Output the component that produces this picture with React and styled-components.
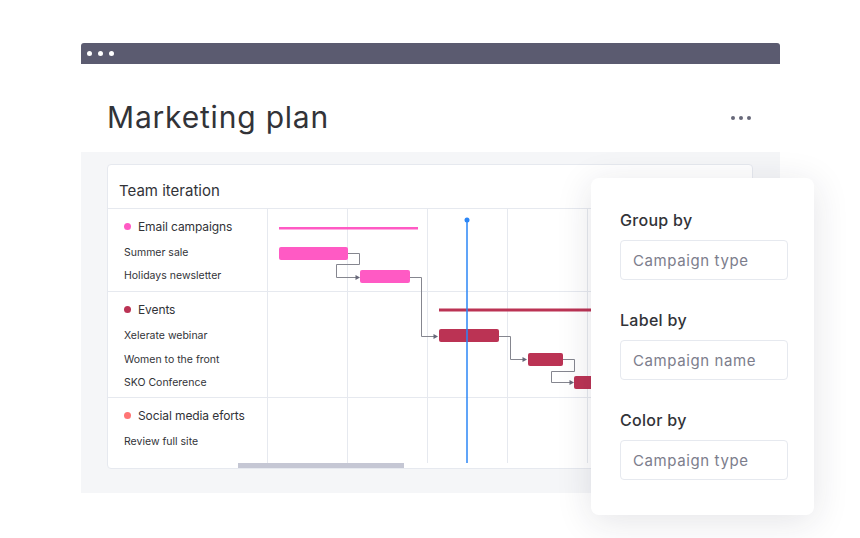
import React from 'react';
import styled, { createGlobalStyle } from 'styled-components';

const GlobalStyle = createGlobalStyle`
    body {
        margin: 0;
        background: #ffffff;
        font-family: Inter, "Noto Sans", sans-serif;
        color: #323338;
    }
`;

const Page = styled.div`
    min-height: 538px;
    box-sizing: border-box;
    padding: 43px 0 0 81px;
`;

const Frame = styled.div`
    width: 699px;
    position: relative;
`;

const WindowBar = styled.div`
    height: 21px;
    background: #5b5b70;
    border-radius: 3px 3px 0 0;
    display: flex;
    align-items: center;
    gap: 6px;
    padding-left: 6px;
`;

const WindowDot = styled.span`
    width: 5px;
    height: 5px;
    border-radius: 50%;
    background: #ffffff;
`;

const TitleRow = styled.div`
    height: 88px;
    box-sizing: border-box;
    padding: 35px 29px 0 26px;
    display: flex;
    align-items: flex-start;
    justify-content: space-between;
`;

const Title = styled.h1`
    margin: 0;
    font-size: 30px;
    line-height: 36px;
    font-weight: 400;
    letter-spacing: 0.8px;
    color: #323338;
`;

const MoreDots = styled.div`
    display: flex;
    gap: 4px;
    margin-top: 17px;

    span {
        width: 4px;
        height: 4px;
        border-radius: 50%;
        background: #676879;
    }
`;

const Board = styled.div`
    background: #f5f6f8;
    height: 341px;
    box-sizing: border-box;
    padding: 12px 27px 0 26px;
`;

const Card = styled.div`
    background: #ffffff;
    border: 1px solid #e6e9ef;
    border-radius: 4px;
    overflow: hidden;
`;

const CardHeader = styled.div`
    height: 44px;
    box-sizing: border-box;
    border-bottom: 1px solid #e6e9ef;
    padding: 16px 0 0 11px;
    font-size: 15px;
    line-height: 20px;
`;

const Body = styled.div`
    position: relative;
    height: 254px;
    display: flex;
    flex-direction: column;
`;

const Group = styled.div`
    display: flex;
    height: ${props => props.height ? `${props.height}px` : 'auto'};
    flex: ${props => props.height ? 'none' : '1'};
    box-sizing: border-box;
    border-bottom: ${props => props.last ? 'none' : '1px solid #e6e9ef'};
`;

const LabelCell = styled.div`
    width: 160px;
    box-sizing: border-box;
    border-right: 1px solid #e6e9ef;
    padding: 7px 0 0 16px;
`;

const TimeCell = styled.div`
    flex: 1;
    background-image: repeating-linear-gradient(
        to right,
        transparent 0,
        transparent 79px,
        #e6e9ef 79px,
        #e6e9ef 80px
    );
`;

const GroupTitle = styled.div`
    display: flex;
    align-items: center;
    gap: 7px;
    height: 20px;
    margin-bottom: 5px;
    font-size: 12px;
    letter-spacing: -0.1px;
    color: #323338;
`;

const GroupDot = styled.span`
    width: 7px;
    height: 7px;
    border-radius: 50%;
    background: ${props => props.color};
`;

const Item = styled.div`
    font-size: 10.5px;
    line-height: ${props => props.tall ? '23.5px' : '23px'};
    color: #323338;
`;

const Chart = styled.svg`
    position: absolute;
    left: 160px;
    top: 0;
    pointer-events: none;
`;

const ScrollTrack = styled.div`
    height: 5px;
    padding-left: 130px;
`;

const ScrollThumb = styled.div`
    width: 166px;
    height: 5px;
    background: #c5c7d4;
`;

const Settings = styled.div`
    position: absolute;
    left: 510px;
    top: 135px;
    width: 223px;
    height: 337px;
    box-sizing: border-box;
    padding: 30px 0 0 29px;
    background: #ffffff;
    border-radius: 8px;
    box-shadow: 0 6px 36px rgba(30, 31, 60, 0.12);
    display: flex;
    flex-direction: column;
    gap: 28px;
`;

const Field = styled.div`
    display: flex;
    flex-direction: column;
    gap: 8px;
`;

const FieldLabel = styled.div`
    font-size: 16px;
    line-height: 24px;
    font-weight: 500;
    letter-spacing: 0.3px;
    color: #323338;
`;

const FieldBox = styled.div`
    width: 168px;
    height: 40px;
    box-sizing: border-box;
    border: 1px solid #e6e9ef;
    border-radius: 4px;
    padding-left: 12px;
    display: flex;
    align-items: center;
    font-size: 15px;
    letter-spacing: 0.6px;
    color: #7c7d8c;
`;

const groups = [
    { name: 'Email campaigns', color: '#ff5ac4', height: 83, items: ['Summer sale', 'Holidays newsletter'] },
    { name: 'Events', color: '#bb3354', height: 106, tall: true, items: ['Xelerate webinar', 'Women to the front', 'SKO Conference'] },
    { name: 'Social media eforts', color: '#ff7575', items: ['Review full site'] },
];

const bars = [
    { x: 11, y: 38, w: 69, color: '#ff5ac4' },
    { x: 92, y: 61, w: 50, color: '#ff5ac4' },
    { x: 171, y: 120, w: 60, color: '#bb3354' },
    { x: 260, y: 144, w: 35, color: '#bb3354' },
    { x: 306, y: 167, w: 60, color: '#bb3354' },
];

const links = [
    { d: 'M80 44.5H91.5V55.5H68.5V68.5H88', tip: [92, 68.5] },
    { d: 'M142 68.5H153.5V127.5H166', tip: [170, 127.5] },
    { d: 'M231 127.5H242.5V150.5H255', tip: [259, 150.5] },
    { d: 'M295 150.5H306.5V162.5H283.5V173.5H302', tip: [306, 173.5] },
];

function GanttChart() {
    return (
        <Chart width="484" height="254" viewBox="0 0 484 254">
            <rect x="11" y="18" width="139" height="2.5" fill="#ff5ac4" />
            <rect x="171" y="99.5" width="320" height="3" fill="#bb3354" />
            {links.map((l, i) => (
                <g key={i}>
                    <path d={l.d} fill="none" stroke="#85868f" strokeWidth="1" />
                    <path
                        d={`M${l.tip[0]} ${l.tip[1]}L${l.tip[0] - 4.5} ${l.tip[1] - 2.5}V${l.tip[1] + 2.5}Z`}
                        fill="#676879"
                    />
                </g>
            ))}
            {bars.map((b, i) => (
                <rect key={i} x={b.x} y={b.y} width={b.w} height="13" rx="2" fill={b.color} />
            ))}
            <line x1="199" y1="11" x2="199" y2="254" stroke="#2b86f6" strokeWidth="1.5" />
            <circle cx="199" cy="11" r="2.5" fill="#2b86f6" />
        </Chart>
    );
}

export default function App() {
    return (
        <Page>
            <GlobalStyle />
            <Frame>
                <WindowBar>
                    <WindowDot />
                    <WindowDot />
                    <WindowDot />
                </WindowBar>
                <TitleRow>
                    <Title>Marketing plan</Title>
                    <MoreDots>
                        <span />
                        <span />
                        <span />
                    </MoreDots>
                </TitleRow>
                <Board>
                    <Card>
                        <CardHeader>Team iteration</CardHeader>
                        <Body>
                            {groups.map((g, i) => (
                                <Group key={g.name} height={g.height} last={i === groups.length - 1}>
                                    <LabelCell>
                                        <GroupTitle>
                                            <GroupDot color={g.color} />
                                            {g.name}
                                        </GroupTitle>
                                        {g.items.map(item => (
                                            <Item key={item} tall={g.tall}>{item}</Item>
                                        ))}
                                    </LabelCell>
                                    <TimeCell />
                                </Group>
                            ))}
                            <GanttChart />
                        </Body>
                        <ScrollTrack>
                            <ScrollThumb />
                        </ScrollTrack>
                    </Card>
                </Board>
                <Settings>
                    <Field>
                        <FieldLabel>Group by</FieldLabel>
                        <FieldBox>Campaign type</FieldBox>
                    </Field>
                    <Field>
                        <FieldLabel>Label by</FieldLabel>
                        <FieldBox>Campaign name</FieldBox>
                    </Field>
                    <Field>
                        <FieldLabel>Color by</FieldLabel>
                        <FieldBox>Campaign type</FieldBox>
                    </Field>
                </Settings>
            </Frame>
        </Page>
    );
}
